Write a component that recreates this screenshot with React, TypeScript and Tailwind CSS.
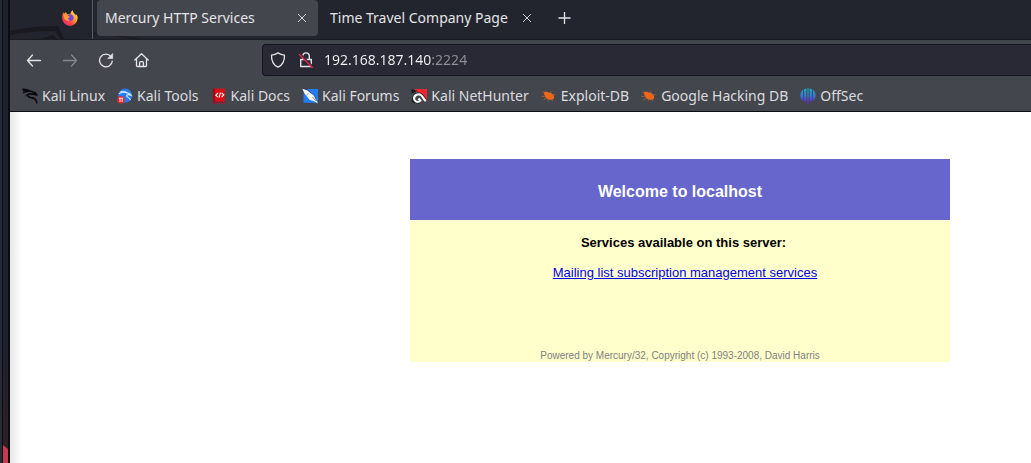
import { useState, type ReactNode } from "react";

type IconProps = { className?: string };

function FirefoxLogo() {
  return (
    <svg viewBox="0 0 16 16" className="size-4" aria-hidden="true">
      <defs>
        <linearGradient id="ff-body" x1="0.85" y1="0.1" x2="0.2" y2="0.95">
          <stop offset="0" stopColor="#ffe14a" />
          <stop offset="0.4" stopColor="#ff9a2c" />
          <stop offset="0.7" stopColor="#ff4a42" />
          <stop offset="1" stopColor="#e6227c" />
        </linearGradient>
      </defs>
      <path
        d="M15.400 6.200c-.4-1-1.200-1.900-1.900-2.200.4.800.6 1.400.7 2C13 3.500 10.900 2.800 10.700.2 9.200 1.200 8.600 2.700 8.500 3.800 7.500 3.800 6.700 4 6 4.400 5 3.900 4.200 3 4 1.900 3 2.300 2.300 3.200 2 3.900 1.600 3.400 1.700 2.500 1.700 2.100.7 3.300.2 5.600.2 8.100a7.700 7.700 0 0 0 15.400.3c.1-.7.1-1.500-.2-2.200z"
        fill="url(#ff-body)"
      />
      <path d="M5.500 5.900c.7-1.500 2.600-2 4.200-1.200 1.800.9 2.400 2.900 1.600 4.600-.8 1.600-2.900 2.200-4.500 1.300C5.300 9.800 5 8.700 5.200 8c1.100.4 1.800 0 2.500-.7-.4-.9-1.200-1.200-2.200-1.400z" fill="#7a43e0" />
      <path d="M1.300 4.600c1.400-.4 2.900.1 4 .8 1 .2 2 .3 2.400 1.200-.8.6-1.400.7-1.700 1.300-.3 1 .8 2.200 2.200 2.200-1.800 1.600-5.200.7-6-2z" fill="#ffa02e" />
    </svg>
  );
}

function CloseIcon() {
  return (
    <svg viewBox="0 0 10 10" className="size-2.5" fill="none" stroke="currentColor" strokeWidth="0.9" aria-hidden="true">
      <path d="M1 1l8 8M9 1L1 9" />
    </svg>
  );
}

function PlusIcon() {
  return (
    <svg viewBox="0 0 14 14" className="size-3.5" fill="none" stroke="currentColor" strokeWidth="1.3" aria-hidden="true">
      <path d="M6.500 1v12M.5 7h12" />
    </svg>
  );
}

function BackIcon() {
  return (
    <svg viewBox="0 0 16 16" className="size-4" fill="none" stroke="currentColor" strokeWidth="1.3" strokeLinecap="round" strokeLinejoin="round" aria-hidden="true">
      <path d="M6.500 3L1.500 8.500l5 5.500M1.700 8.500h12.800" />
    </svg>
  );
}

function ForwardIcon() {
  return (
    <svg viewBox="0 0 16 16" className="size-4" fill="none" stroke="currentColor" strokeWidth="1.3" strokeLinecap="round" strokeLinejoin="round" aria-hidden="true">
      <path d="M9.500 3l5 5.500-5 5.500M14.300 8.500H1.500" />
    </svg>
  );
}

function ReloadIcon() {
  return (
    <svg viewBox="0 0 16 16" className="size-4" fill="none" stroke="currentColor" strokeWidth="1.3" strokeLinecap="round" aria-hidden="true">
      <path d="M13 4.500A6.400 6.400 0 1 0 14.300 9.200" />
      <path d="M14.700 1.800v4.700H10z" fill="currentColor" strokeWidth="0.6" strokeLinejoin="round" />
    </svg>
  );
}

function HomeIcon() {
  return (
    <svg viewBox="0 0 16 16" className="size-4" fill="none" stroke="currentColor" strokeWidth="1.3" strokeLinecap="round" strokeLinejoin="round" aria-hidden="true">
      <path d="M.8 8L7.500 1.700 14.200 8M2.500 6.800v6.700c0 .6.400 1 1 1h8c.6 0 1-.4 1-1V6.800M5.600 14.300v-3.700c0-.6.400-1 1-1h1.800c.6 0 1 .4 1 1v3.700" />
    </svg>
  );
}

function ShieldIcon() {
  return (
    <svg viewBox="0 0 16 16" className="size-4" fill="none" stroke="currentColor" strokeWidth="1.3" strokeLinejoin="round" aria-hidden="true">
      <path d="M8 .9c2 1.300 4.200 2 6.500 2.300C14.700 8.600 12.600 13 8 15.200 3.400 13 1.300 8.600 1.500 3.200 3.800 2.900 6 2.200 8 .9z" />
    </svg>
  );
}

function InsecureLockIcon() {
  return (
    <svg viewBox="0 0 16 16" className="size-4" fill="none" stroke="currentColor" strokeWidth="1.4" strokeLinejoin="round" aria-hidden="true">
      <path d="M4.700 7V4.300C4.700 2.300 6.100.9 8 .9s3.300 1.400 3.300 3.400V7M2.700 7.500h10.600v7H2.700z" />
      <path d="M2.600 2.800l11.500 11.500" stroke="#2a2a36" strokeWidth="2.200" />
      <path d="M1.400 2.400l13 13" stroke="#e22850" strokeWidth="1.400" strokeLinecap="round" />
    </svg>
  );
}

function KaliLinuxIcon() {
  return (
    <svg viewBox="0 0 16 16" className="size-4" fill="none" stroke="#08090b" aria-hidden="true">
      <path d="M.3 1.300C3 1.100 5.500 1.700 7.500 2.800M1.200 4.900C3 3.600 5 3.100 7 3.300" strokeWidth="1.500" />
      <path d="M.8 2.900c2.500-.5 4.500-.3 7 .3" strokeWidth="1.200" />
      <path d="M5.500 2.500c4 .4 6.500 1.300 8.600 4.200l-3-.6c-3-.6-5.600 0-5.200 1.900.5 2 4.600 1.100 6.900 2.800 1.500 1.200 1.900 2.800 2.200 4.600" strokeWidth="1.700" />
      <path d="M3.200 8.200C4.300 7 5.500 6.300 7 6M13 3.700l2 2.900" strokeWidth="1" />
    </svg>
  );
}

function KaliToolsIcon() {
  return (
    <svg viewBox="0 0 16 16" className="size-4" aria-hidden="true">
      <circle cx="8.200" cy="7.600" r="7" fill="#267bf5" />
      <path d="M1.800 5.800c2.800-2 5.600-2 8.200-.7M3.500 3.800c2.600-1 5-.4 6.800 1.100 2 .3 3.300 1.200 4 2.500-2.100-1-4.700-1.300-4.700.3 0 1.400 2.800 1.400 3.900 4.400" fill="none" stroke="#d5e8ff" strokeWidth="1.100" />
      <circle cx="4" cy="11.700" r="3.800" fill="#e5262d" />
      <path d="M3 14v-4M5.200 14v-4M2 10.200h4.200" stroke="#fff" strokeWidth="0.900" />
    </svg>
  );
}

function KaliDocsIcon() {
  return (
    <svg viewBox="0 0 16 16" className="size-4" aria-hidden="true">
      <path d="M2 .6h12v14.800H2z" fill="#d90d16" />
      <path d="M2 .6h1.800v14.800H2z" fill="#9d0710" />
      <path d="M2.400 13.700H14v1.200H2.400z" fill="#5c2a50" />
      <path d="M7 5L4.800 7.200 7 9.200M10.600 4.800l2.200 2-2.200 2.300M9.400 4.600L8.200 9.500" fill="none" stroke="#fff" strokeWidth="1.100" />
    </svg>
  );
}

function KaliForumsIcon() {
  return (
    <svg viewBox="0 0 16 16" className="size-4" aria-hidden="true">
      <path d="M1.500 1H16v13.800H1.500z" fill="#247bf2" />
      <path d="M0 .8l5.300.6 7.200 6.300 3.100 7.500-7.100-3.800L1.300 4.800z" fill="#17243a" />
      <path d="M.3.700l4.800 1.500 6.800 5.200 1.600 3.600 2.500 4.400-4.600-2.500-3.700-1L2.200 5.200z" fill="#f3f5f7" />
      <path d="M6.500 5.300L4.500 7.200M10.500 9l3.300 3.900" stroke="#596270" strokeWidth=".7" />
    </svg>
  );
}

function NetHunterIcon() {
  return (
    <svg viewBox="0 0 16 16" className="size-4" aria-hidden="true">
      <path d="M3.500 1H16v12.500L9 6z" fill="#ef252d" />
      <path d="M.5 1.200l6.500 1.500L.7 5.500zM.8 11l3.700 4-3.500-.8z" fill="#15171c" />
      <path d="M4 2.200l4 .8-3 .7z" fill="#ef252d" />
      <path d="M8.500 13.700c-3 1-6-.9-5.600-3.700.5-3.500 5-5.100 7.600-2.700 1.500 1.300 2.300 4 4.400 5.500" fill="none" stroke="#15171c" strokeWidth="3.200" />
      <path d="M8.500 13.500c-3 1-5.800-.9-5.400-3.500.5-3.300 4.800-4.700 7.300-2.500 1.600 1.400 2.300 4 4.400 5.500M7.500 10.500l2.500 2.800" fill="none" stroke="#f5f5f6" strokeWidth="2.300" />
    </svg>
  );
}

function ExploitIcon() {
  return (
    <svg viewBox="0 0 16 16" className="size-4" fill="#ef6716" aria-hidden="true">
      <path d="M3.400 3.800c2.600-.4 4 .4 5.200 1 2.400-.1 4.500 2.500 4.600 4.800 0 2.400-3.500 2.500-5.800 1.600-1.800-.7-3.400-2-3.500-3.800C2.600 6.800 2.700 5.200 3.400 3.800z" />
      <path d="M4 5L1.500 3.800M4.500 8L.5 8.500M5.500 10L2.500 11.800M8.500 6l1.600-2.800M11 7.300l3.500-.8M8 11l-1.300 2M10.500 11.300l1.400 2" fill="none" stroke="#c96632" strokeWidth=".7" />
    </svg>
  );
}

function OffSecIcon() {
  return (
    <svg viewBox="0 0 16 16" className="size-4" aria-hidden="true">
      <defs>
        <linearGradient id="offsec-fill" x1="0" y1="0" x2="0" y2="16" gradientUnits="userSpaceOnUse">
          <stop offset="0" stopColor="#18b3b9" />
          <stop offset="0.5" stopColor="#3474d6" />
          <stop offset="1" stopColor="#6a18d4" />
        </linearGradient>
      </defs>
      <g fill="url(#offsec-fill)">
        <path d="M3.100 1.800C3.300 6 3 9 3.400 13.200-.2 11.500-1.200 5 3.100 1.800zM4 1.300C4.800.8 5.600.5 6.300.4v12c-.4.900-1 1.200-2 1.200C3.900 9.400 4.200 6 4 1.300zM7.300.2h1.400V16H7.300zM9.700.4c.7.100 1.500.400 2.300.9-.2 4.700.1 8.100-.3 12.300-1 0-1.600-.3-2-1.200zM12.900 1.800c4.300 3.200 3.300 9.700-.3 11.400.4-4.200.1-7.200.3-11.400z" />
      </g>
    </svg>
  );
}

function DragonBackdrop({ className }: IconProps) {
  return (
    <svg viewBox="0 0 160 40" className={className} aria-hidden="true">
      <path d="M0 31C16 27 33 26 48 26l7 14h-4l-6-9C29 31 14 32 0 35z" fill="#181a20" />
      <path d="M27 40l16-5 5 5h-5l-2-2-5 2z" fill="#181a20" />
      <path d="M72 33c21 0 43 3 68 7h-12C108 37 91 34 72 33z" fill="#1b1d24" />
    </svg>
  );
}

const tabs = ["Mercury HTTP Services", "Time Travel Company Page"];

const bookmarks: { label: string; icon: ReactNode }[] = [
  { label: "Kali Linux", icon: <KaliLinuxIcon /> },
  { label: "Kali Tools", icon: <KaliToolsIcon /> },
  { label: "Kali Docs", icon: <KaliDocsIcon /> },
  { label: "Kali Forums", icon: <KaliForumsIcon /> },
  { label: "Kali NetHunter", icon: <NetHunterIcon /> },
  { label: "Exploit-DB", icon: <ExploitIcon /> },
  { label: "Google Hacking DB", icon: <ExploitIcon /> },
  { label: "OffSec", icon: <OffSecIcon /> },
];

function TabStrip() {
  return (
    <header className="relative flex h-10 items-start overflow-hidden border-b border-[#1b1c22] bg-[#23252e]">
      <DragonBackdrop className="absolute top-0 left-0 h-10 w-40" />
      <div className="relative flex h-10 w-[83px] shrink-0 items-center justify-end border-r border-[#5b5d66] pr-3.5 pb-1">
        <FirefoxLogo />
      </div>
      <div className="relative ml-1 flex h-9" role="tablist" aria-label="Open tabs">
        {tabs.map((title, i) => (
          <div
            key={title}
            className={
              i === 0
                ? "flex w-[221px] items-center justify-between rounded bg-[#44464e] px-2"
                : "flex w-[229px] items-center justify-between px-3"
            }
          >
            <button type="button" role="tab" aria-selected={i === 0} className="whitespace-nowrap">
              {title}
            </button>
            <button type="button" aria-label={`Close ${title}`} className="flex size-4 items-center justify-center">
              <CloseIcon />
            </button>
          </div>
        ))}
      </div>
      <button type="button" aria-label="New tab" className="relative ml-1.5 flex h-9 w-6 items-center justify-center">
        <PlusIcon />
      </button>
    </header>
  );
}

function NavBar() {
  const [url, setUrl] = useState("192.168.187.140:2224");
  return (
    <div className="flex h-10 items-center">
      <nav className="flex w-[252px] shrink-0 gap-5 pl-4" aria-label="History">
        <button type="button" aria-label="Back"><BackIcon /></button>
        <button type="button" aria-label="Forward" disabled className="text-[#85868c]"><ForwardIcon /></button>
        <button type="button" aria-label="Reload"><ReloadIcon /></button>
        <button type="button" aria-label="Home"><HomeIcon /></button>
      </nav>
      <div className="flex h-8 flex-1 items-center gap-3 rounded-l border border-r-0 border-[#14151b] bg-[#282935] pl-[7px]">
        <ShieldIcon />
        <InsecureLockIcon />
        <input
          aria-label="Address"
          value={url}
          onChange={(e) => setUrl(e.target.value)}
          className="-ml-0.5 min-w-0 flex-1 bg-[linear-gradient(90deg,#f4f4f6_108px,#8f9097_108px)] bg-clip-text text-transparent outline-none"
        />
      </div>
    </div>
  );
}

function BookmarksBar() {
  return (
    <nav className="flex h-8 items-center gap-3 border-b border-[#0d0e13] pl-3 text-[#dcdcde]" aria-label="Bookmarks">
      {bookmarks.map((b) => (
        <a key={b.label} href="#" className="flex items-center gap-1 whitespace-nowrap">
          {b.icon}
          {b.label}
        </a>
      ))}
    </nav>
  );
}

function MercuryPage() {
  return (
    <main className="flex-1 bg-white bg-[linear-gradient(90deg,#e8e8e8,#ffffff_12px)] pt-[47px] pl-[400px] font-['Liberation_Sans',Arial,sans-serif]">
      <div className="w-[540px] text-center">
        <h1 className="bg-[#6666cc] pt-[21px] pb-4 text-base font-bold text-white">Welcome to localhost</h1>
        <section className="bg-[#ffffcc] pt-[13px] text-[13px] leading-5 text-black">
          <h2 className="pl-[7px] font-bold">Services available on this server:</h2>
          <p className="mt-2.5 pl-2.5">
            <a href="#" className="text-[#0000ee] underline">Mailing list subscription management services</a>
          </p>
          <footer className="pt-[67px] text-[10px] leading-3 text-[#808080]">
            Powered by Mercury/32, Copyright (c) 1993-2008, David Harris
          </footer>
        </section>
      </div>
    </main>
  );
}

export default function App() {
  return (
    <div className="flex min-h-screen bg-white text-[14px] leading-5 text-[#e4e4e6] font-['Noto_Sans',sans-serif]">
      <aside className="flex w-2.5 shrink-0 border-r-2 border-[#0b0c10] bg-[linear-gradient(180deg,#1e222c_75%,#2a2026_90%)]" aria-hidden="true">
        <div className="w-0.5 bg-[#262b37]" />
        <div className="w-px bg-[#0b0c10]" />
        <svg viewBox="0 0 5 18" className="h-[18px] w-[5px] self-end">
          <path d="M0 0l5 4v14H0z" fill="#c93750" />
        </svg>
      </aside>
      <div className="flex min-w-0 flex-1 flex-col bg-[#44464e]">
        <TabStrip />
        <NavBar />
        <BookmarksBar />
        <MercuryPage />
      </div>
    </div>
  );
}
